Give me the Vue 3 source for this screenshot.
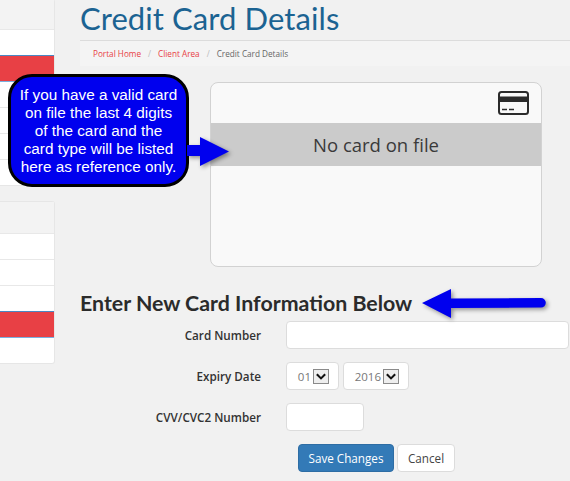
<template>
  <div class="page">
    <aside class="sidebar">
      <div class="panel first">
        <div class="row head"></div>
        <div class="row"></div>
        <div class="row active"></div>
        <div class="row"></div>
        <div class="row"></div>
        <div class="row"></div>
        <div class="row"></div>
      </div>
      <div class="panel second">
        <div class="row head"></div>
        <div class="row"></div>
        <div class="row"></div>
        <div class="row"></div>
        <div class="row active"></div>
        <div class="row"></div>
      </div>
    </aside>

    <main class="main">
      <h1 class="title">Credit Card Details</h1>
      <nav class="crumbs">
        <a>Portal Home</a><i>/</i><a>Client Area</a><i>/</i><span>Credit Card Details</span>
      </nav>

      <section class="card-box">
        <div class="card-top">
          <svg class="card-icon" viewBox="0 0 31 24" aria-hidden="true">
            <rect x="1" y="1" width="29" height="22" rx="2.5" fill="#f9f9f9" stroke="#2b2b2b" stroke-width="2" />
            <rect x="1.5" y="5.500" width="28" height="5.500" fill="#2b2b2b" />
            <path d="M4 18.500h5M11 18.500h5" stroke="#2b2b2b" stroke-width="1.600" />
          </svg>
        </div>
        <div class="card-empty">No card on file</div>
      </section>

      <h2 class="subhead">Enter New Card Information Below</h2>

      <form class="form" @submit.prevent>
        <label class="lbl">Card Number</label>
        <div class="field"><input class="input wide" type="text" /></div>

        <label class="lbl">Expiry Date</label>
        <div class="field selects">
          <div v-for="s in selects" :key="s.value" class="select" :style="{ width: s.width + 'px' }">
            <span>{{ s.value }}</span>
            <span class="drop">
              <svg viewBox="0 0 14 14" aria-hidden="true"><path d="M2.500 4.500L7 9l4.500-4.500" fill="none" stroke="#111" stroke-width="2.200" /></svg>
            </span>
          </div>
        </div>

        <label class="lbl">CVV/CVC2 Number</label>
        <div class="field"><input class="input short" type="text" /></div>

        <div class="actions">
          <button type="submit" class="btn primary">Save Changes</button>
          <button type="button" class="btn">Cancel</button>
        </div>
      </form>
    </main>

    <!-- annotations pasted over the screenshot -->
    <div class="callout">
      If you have a valid card<br />on file the last 4 digits<br />of the card and the<br />card type will be listed<br />here as reference only.
    </div>
    <svg class="arrow arrow-right" viewBox="0 0 46 34" aria-hidden="true">
      <path d="M0 10h13V2l29 14.500-29 14.500v-10H0z" fill="#0000ee" />
    </svg>
    <svg class="arrow arrow-left" viewBox="0 0 128 34" aria-hidden="true">
      <path d="M1 16L30 2v9.500l90-.5a4.800 4.800 0 0 1 0 9.600l-90 .4v10z" fill="#0000ee" />
    </svg>
  </div>
</template>

<script setup>
const selects = [
  { value: '01', width: 53 },
  { value: '2016', width: 66 },
]
</script>

<style>
html, body {
  margin: 0;
  background: #f1f1f1;
  overflow: hidden;
}
</style>

<style scoped>
.page {
  position: relative;
  display: flex;
  width: 570px;
  height: 481px;
  overflow: hidden;
  background: #f1f1f1;
  font-family: "Open Sans", "Liberation Sans", sans-serif;
  color: #333;
}

.sidebar {
  width: 55px;
  flex-shrink: 0;
}
.panel {
  border: 1px solid #e6e6e6;
  border-left: none;
  border-radius: 0 3px 3px 0;
  background: #fff;
}
.panel.first {
  margin-top: -1px;
}
.panel.second {
  margin-top: 15px;
}
.row {
  height: 25px;
  border-bottom: 1px solid #e8e8e8;
}
.row:last-child {
  border-bottom: none;
}
.row.head {
  height: 31px;
  background: #f3f3f3;
}
.first .row.head {
  height: 29px;
}
.row.active {
  background: #e84045;
  border-top: 1px solid #4b87c2;
  border-bottom: 1px solid #7ab0e0;
  margin-top: -1px;
}

.main {
  width: 490px;
  flex-shrink: 0;
  padding-left: 25px;
}
.title {
  box-sizing: content-box;
  height: 40px;
  margin: 0;
  font-family: Lato, "Open Sans", sans-serif;
  font-size: 31px;
  font-weight: 400;
  line-height: 36px;
  letter-spacing: 0.08px;
  color: #1b6392;
  border-bottom: 1px solid #dcdcdc;
}
.crumbs {
  display: flex;
  align-items: center;
  height: 25px;
  padding-left: 13px;
  font-size: 8.200px;
  color: #666;
  background: #f4f4f4;
}
.crumbs a {
  color: #e84045;
}
.crumbs i {
  margin: 0 7px;
  font-style: normal;
  color: #bbb;
}

.card-box {
  box-sizing: border-box;
  width: 332px;
  height: 185px;
  margin: 16px 0 0 130px;
  background: #f9f9f9;
  border: 1px solid #d2d2d2;
  border-radius: 8px;
}
.card-top {
  display: flex;
  justify-content: flex-end;
  align-items: flex-start;
  height: 40px;
  padding: 8px 12px 0 0;
  box-sizing: border-box;
}
.card-icon {
  width: 31px;
  height: 24px;
}
.card-empty {
  height: 43px;
  line-height: 43px;
  text-align: center;
  font-size: 18.500px;
  color: #3a3a3a;
  background: #cbcbcb;
}

.subhead {
  margin: 24px 0 0;
  font-family: Lato, "Open Sans", sans-serif;
  font-size: 21.350px;
  font-weight: 700;
  line-height: 24px;
  color: #2b2b2b;
}

.form {
  display: grid;
  grid-template-columns: 181px 1fr;
  column-gap: 25px;
  row-gap: 13px;
  margin-top: 6px;
}
.lbl {
  align-self: center;
  text-align: right;
  font-size: 11.700px;
  font-weight: 600;
  color: #333;
}
.field {
  display: flex;
  gap: 4px;
}
.input {
  box-sizing: border-box;
  height: 28px;
  padding: 0 8px;
  background: #fff;
  border: 1px solid #dcdcdc;
  border-radius: 4px;
  outline: none;
}
.wide {
  width: 283px;
}
.short {
  width: 78px;
}
.select {
  box-sizing: border-box;
  display: flex;
  align-items: center;
  justify-content: flex-end;
  gap: 2px;
  height: 28px;
  padding-right: 9px;
  font-size: 11.500px;
  color: #777;
  background: #fff;
  border: 1px solid #dcdcdc;
  border-radius: 4px;
}
.drop {
  box-sizing: border-box;
  display: flex;
  width: 16px;
  height: 15px;
  background: #eee;
  border: 1px solid #8a8a8a;
}
.drop svg {
  width: 14px;
  height: 13px;
}
.actions {
  grid-column: 2;
  display: flex;
  gap: 3px;
  padding-left: 12px;
}
.btn {
  height: 28px;
  padding: 0 10px;
  font-family: inherit;
  font-size: 11.700px;
  color: #444;
  background: #fff;
  border: 1px solid #dcdcdc;
  border-radius: 4px;
}
.btn.primary {
  width: 96px;
  padding: 0;
  color: #fff;
  background: #337ab7;
  border-color: #2e6da4;
}

.callout {
  position: absolute;
  left: 8px;
  top: 74px;
  box-sizing: border-box;
  width: 181px;
  height: 113px;
  padding-top: 9px;
  font-family: "Liberation Sans", Arial, sans-serif;
  font-size: 15.300px;
  line-height: 18px;
  text-align: center;
  color: #fff;
  background: #0000ee;
  border: 3px solid #000;
  border-radius: 24px;
}
.arrow {
  position: absolute;
  filter: drop-shadow(2px 2px 2px rgba(0, 0, 0, 0.4));
}
.arrow-right {
  left: 187px;
  top: 135px;
  width: 46px;
  height: 34px;
}
.arrow-left {
  left: 421px;
  top: 287px;
  width: 128px;
  height: 34px;
}
</style>
